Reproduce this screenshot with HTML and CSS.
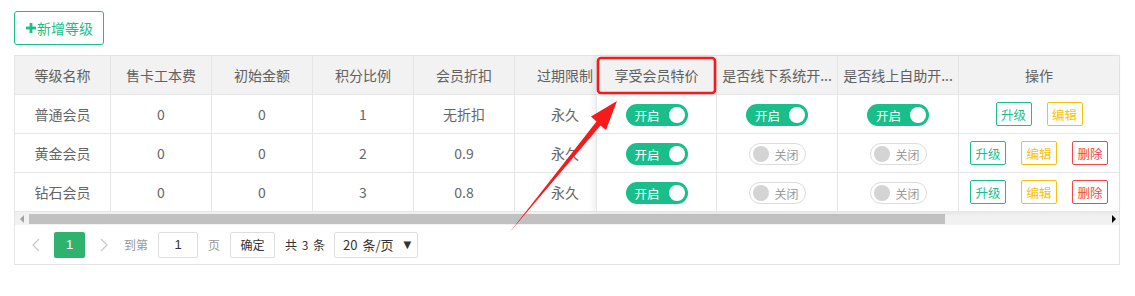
FILE: index.html
```html
<!DOCTYPE html>
<html>
  <head lang="zh-CN">
    <meta charset="UTF-8" />
    <title>会员等级</title>
    <link rel="stylesheet" href="styles.css">
  </head>

  <body>
    <div class="page">
      <button class="btn-add">
        <svg class="plus" width="10" height="10" viewBox="0 0 10 10"><rect x="3.6" y="0" width="2.8" height="10" /><rect x="0" y="3.6" width="10" height="2.8" /></svg>新增等级
      </button>

      <div class="tbl">
        <!-- 可横向滚动的主体 -->
        <div class="tbl-main">
          <div class="row head">
            <div class="cell c1">等级名称</div>
            <div class="cell c2">售卡工本费</div>
            <div class="cell c2">初始金额</div>
            <div class="cell c2">积分比例</div>
            <div class="cell c2">会员折扣</div>
            <div class="cell c2">过期限制</div>
            <div class="cell rest"></div>
          </div>
          <div class="row">
            <div class="cell c1">普通会员</div>
            <div class="cell c2">0</div>
            <div class="cell c2">0</div>
            <div class="cell c2">1</div>
            <div class="cell c2">无折扣</div>
            <div class="cell c2">永久</div>
            <div class="cell rest"></div>
          </div>
          <div class="row">
            <div class="cell c1">黄金会员</div>
            <div class="cell c2">0</div>
            <div class="cell c2">0</div>
            <div class="cell c2">2</div>
            <div class="cell c2">0.9</div>
            <div class="cell c2">永久</div>
            <div class="cell rest"></div>
          </div>
          <div class="row">
            <div class="cell c1">钻石会员</div>
            <div class="cell c2">0</div>
            <div class="cell c2">0</div>
            <div class="cell c2">3</div>
            <div class="cell c2">0.8</div>
            <div class="cell c2">永久</div>
            <div class="cell rest"></div>
          </div>
        </div>

        <!-- 右侧固定列 -->
        <div class="tbl-fixed">
          <div class="row head">
            <div class="cell f1">享受会员特价</div>
            <div class="cell f2">是否线下系统开...</div>
            <div class="cell f2">是否线上自助开...</div>
            <div class="cell f3">操作</div>
          </div>
          <div class="row">
            <div class="cell f1"><span class="sw on">开启<i></i></span></div>
            <div class="cell f2"><span class="sw on">开启<i></i></span></div>
            <div class="cell f2"><span class="sw on">开启<i></i></span></div>
            <div class="cell f3 ops">
              <span class="op green">升级</span>
              <span class="op yellow">编辑</span>
            </div>
          </div>
          <div class="row">
            <div class="cell f1"><span class="sw on">开启<i></i></span></div>
            <div class="cell f2"><span class="sw off"><i></i>关闭</span></div>
            <div class="cell f2"><span class="sw off"><i></i>关闭</span></div>
            <div class="cell f3 ops">
              <span class="op green">升级</span>
              <span class="op yellow">编辑</span>
              <span class="op red">删除</span>
            </div>
          </div>
          <div class="row">
            <div class="cell f1"><span class="sw on">开启<i></i></span></div>
            <div class="cell f2"><span class="sw off"><i></i>关闭</span></div>
            <div class="cell f2"><span class="sw off"><i></i>关闭</span></div>
            <div class="cell f3 ops">
              <span class="op green">升级</span>
              <span class="op yellow">编辑</span>
              <span class="op red">删除</span>
            </div>
          </div>
        </div>

        <div class="hscroll">
          <span class="arr left"></span>
          <div class="track"><div class="thumb"></div></div>
          <span class="arr right"></span>
        </div>

        <div class="pager">
          <span class="pg-nav"><svg width="10" height="14" viewBox="0 0 10 14"><path d="M8 1 L2 7 L8 13" /></svg></span>
          <span class="pg-cur">1</span>
          <span class="pg-nav next"><svg width="10" height="14" viewBox="0 0 10 14"><path d="M2 1 L8 7 L2 13" /></svg></span>
          <span class="pg-txt">到第</span>
          <span class="pg-input">1</span>
          <span class="pg-txt">页</span>
          <span class="pg-btn">确定</span>
          <span class="pg-total">共 3 条</span>
          <span class="pg-select">20 条/页<b>&#9660;</b></span>
        </div>
      </div>

      <!-- 标注 -->
      <svg class="mark" width="1135" height="296" viewBox="0 0 1135 296">
        <rect x="598" y="58" width="117" height="35" rx="3" fill="none" stroke="#f51b1b" stroke-width="2.6" />
        <polygon fill="#f51b1b" points="509.5,232.5 600.5,125.5 606,130 617,101 591,116.5 596.5,121.5" />
      </svg>
    </div>
  </body>
</html>
```

FILE: styles.css
```css
* {
  padding: 0;
  margin: 0;
  box-sizing: border-box;
}

body {
  font-family: "Noto Sans CJK SC", "Microsoft YaHei", sans-serif;
  color: #666;
  background: #fff;
}

.page {
  position: relative;
  width: 1135px;
  height: 296px;
  padding: 11px 0 0 14px;
}

.btn-add {
  display: flex;
  align-items: center;
  height: 34px;
  width: 90px;
  padding-left: 11px;
  border: 1px solid #19be8b;
  border-radius: 3px;
  background: #fff;
  color: #19be8b;
  font: 14px "Noto Sans CJK SC", sans-serif;
}

.btn-add .plus {
  fill: #19be8b;
  margin-right: 1px;
}

.tbl {
  position: relative;
  margin-top: 10px;
  width: 1106px;
  border: 1px solid #e4e4e4;
}

.tbl-main {
  overflow: hidden;
}

.row {
  display: flex;
  height: 39px;
  border-bottom: 1px solid #e6e6e6;
}

.cell {
  display: flex;
  align-items: center;
  justify-content: center;
  flex-shrink: 0;
  height: 38px;
  border-right: 1px solid #e6e6e6;
  font-size: 14px;
  white-space: nowrap;
  overflow: hidden;
}

.head {
  background-color: #f2f2f2;
}

.head .cell {
  color: #606060;
}

.c1 {
  width: 96px;
}

.c2 {
  width: 101px;
}

.rest {
  flex: 1;
  border-right: 0;
}

.tbl-fixed {
  position: absolute;
  top: 0;
  right: 0;
  width: 523px;
  background: #fff;
  border-left: 1px solid #e6e6e6;
  box-shadow: -2px 0 6px rgba(0, 0, 0, 0.08);
}

.f1 {
  width: 120px;
}

.f2 {
  width: 121px;
}

.f3 {
  width: 160px;
  border-right: 0;
}

.sw {
  display: flex;
  align-items: center;
  height: 22px;
  margin-top: 2px;
  border-radius: 11px;
  font-size: 12.5px;
}

.sw i {
  display: block;
  width: 16px;
  height: 16px;
  border-radius: 50%;
}

.sw.on {
  width: 62px;
  padding: 0 3px 0 9px;
  justify-content: space-between;
  background-color: #19be8b;
  color: #fff;
}

.sw.on i {
  background: #fff;
}

.sw.off {
  width: 57px;
  padding: 0 6px 0 3px;
  justify-content: space-between;
  border: 1px solid #dcdcdc;
  color: #999;
  font-size: 12px;
}

.sw.off i {
  background: #d4d4d4;
}

.ops {
  gap: 15px;
}

.op {
  display: flex;
  align-items: center;
  justify-content: center;
  width: 36px;
  height: 24px;
  border: 1px solid;
  border-radius: 2px;
  font-size: 12.5px;
}

.green {
  color: #19be8b;
  border-color: #19be8b;
}

.yellow {
  color: #f9c20a;
  border-color: #f9c20a;
}

.red {
  color: #f54545;
  border-color: #f54545;
}

.hscroll {
  display: flex;
  align-items: center;
  height: 13px;
  background: #f1f1f1;
}

.arr {
  width: 0;
  height: 0;
  border-top: 4px solid transparent;
  border-bottom: 4px solid transparent;
}

.arr.left {
  margin: 0 5px 0 5px;
  border-right: 4px solid #a3a3a3;
}

.arr.right {
  margin: 0 3px 0 5px;
  border-left: 4px solid #000;
}

.track {
  flex: 1;
  height: 10px;
}

.thumb {
  width: 916px;
  height: 10px;
  background: #c1c1c1;
}

.pager {
  display: flex;
  align-items: center;
  height: 39px;
  padding-left: 11px;
  font-size: 12px;
  color: #333;
}

.pg-nav {
  display: flex;
  justify-content: center;
  width: 20px;
}

.pg-nav path {
  fill: none;
  stroke: #c8c8c8;
  stroke-width: 1.2;
}

.pg-cur {
  display: flex;
  align-items: center;
  justify-content: center;
  width: 31px;
  height: 26px;
  margin-left: 8px;
  border-radius: 2px;
  background: #2fb26e;
  color: #fff;
  font: 13px "Liberation Sans", sans-serif;
}

.next {
  margin-left: 9px;
}

.pg-txt {
  color: #999;
  margin-left: 10px;
}

.pg-input {
  display: flex;
  align-items: center;
  justify-content: center;
  width: 40px;
  height: 26px;
  margin-left: 10px;
  border: 1px solid #ddd;
  border-radius: 2px;
  font: 13px "Liberation Sans", sans-serif;
}

.pg-btn {
  display: flex;
  align-items: center;
  justify-content: center;
  width: 45px;
  height: 26px;
  margin-left: 10px;
  border: 1px solid #ddd;
  border-radius: 2px;
}

.pg-total {
  margin-left: 10px;
  word-spacing: 2px;
}

.pg-select {
  display: flex;
  align-items: center;
  justify-content: space-between;
  width: 84px;
  height: 26px;
  margin-left: 9px;
  padding: 0 6px 0 8px;
  border: 1px solid #ddd;
  border-radius: 2px;
  font-size: 13px;
  word-spacing: 2px;
}

.pg-select b {
  font: 10px "DejaVu Sans", sans-serif;
}

.mark {
  position: absolute;
  left: 0;
  top: 0;
  pointer-events: none;
}
```
